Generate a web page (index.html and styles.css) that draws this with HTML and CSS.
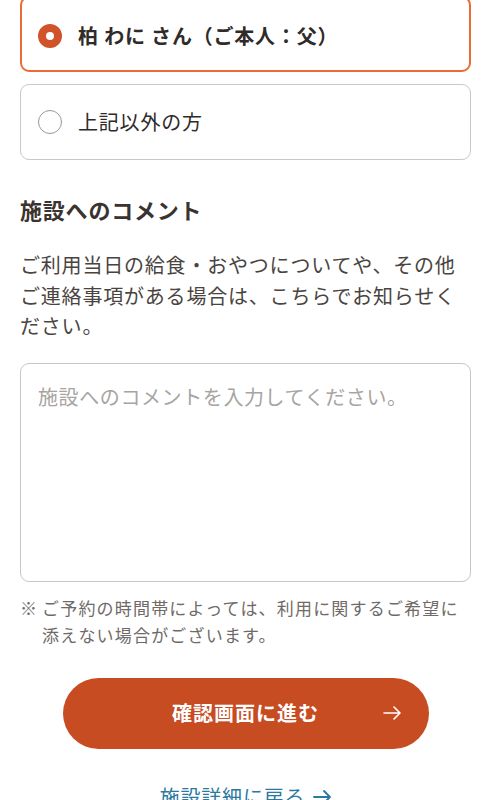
FILE: index.html
```html
<!DOCTYPE html>
<html lang="ja">
<head>
<meta charset="utf-8">
<title>施設へのコメント</title>
<link rel="stylesheet" href="styles.css">
</head>
<body>
<main class="page">
  <div class="options">
    <label class="option option--selected">
      <span class="radio radio--on"></span>
      <span class="option-label option-label--bold">柏 わに さん（ご本人：父）</span>
    </label>
    <label class="option">
      <span class="radio"></span>
      <span class="option-label">上記以外の方</span>
    </label>
  </div>

  <h2 class="section-title">施設へのコメント</h2>
  <p class="lead">ご利用当日の給食・おやつについてや、その他ご連絡事項がある場合は、こちらでお知らせください。</p>

  <textarea class="comment" placeholder="施設へのコメントを入力してください。"></textarea>

  <p class="note"><span class="note-mark">※</span><span class="note-text">ご予約の時間帯によっては、利用に関するご希望に添えない場合がございます。</span></p>

  <button class="primary-btn" type="button">
    <span class="btn-spacer"></span>
    <span class="btn-text">確認画面に進む</span>
    <svg class="btn-arrow" width="18" height="14" viewBox="0 0 18 14" fill="none" stroke="#fff" stroke-width="1.6" stroke-linecap="round" stroke-linejoin="round"><path d="M1 7H17M11 1L17 7L11 13"/></svg>
  </button>

  <a class="back-link" href="#">施設詳細に戻る<svg class="link-arrow" width="18" height="14" viewBox="0 0 18 14" fill="none" stroke="currentColor" stroke-width="1.8" stroke-linecap="round" stroke-linejoin="round"><path d="M1 7H17M11 1L17 7L11 13"/></svg></a>
</main>
</body>
</html>
```
FILE: styles.css
```css
html, body {
  margin: 0;
  padding: 0;
  background: #ffffff;
}

body {
  font-family: "Noto Sans CJK JP", "Noto Sans", sans-serif;
  color: #3a3431;
  letter-spacing: 0.05em;
}

.page {
  display: flex;
  flex-direction: column;
  padding: 0 21px 0 20px;
  margin-top: -4px;
}

.options {
  display: flex;
  flex-direction: column;
  gap: 12px;
}

.option {
  display: flex;
  align-items: center;
  gap: 16px;
  height: 76px;
  box-sizing: border-box;
  padding: 0 18px 0 17px;
  border: 1px solid #cbc8c5;
  border-radius: 9px;
  background: #fff;
}

.option--selected {
  border: 2px solid #ea6c35;
  padding-left: 16px;
  padding-top: 4px;
}

.radio {
  flex: 0 0 auto;
  width: 24px;
  height: 24px;
  box-sizing: border-box;
  border: 1.5px solid #9b9794;
  border-radius: 50%;
}

.radio--on {
  border: 8px solid #d0532a;
  background: #fff;
}

.option-label {
  font-size: 20px;
  line-height: 30px;
  color: #2f2b29;
}

.option-label--bold {
  font-weight: 700;
}

.section-title {
  margin: 33px 0 0;
  font-size: 22px;
  line-height: 33px;
  font-weight: 700;
  color: #3a3330;
}

.lead {
  margin: 24px 0 0;
  font-size: 20px;
  line-height: 30.5px;
  color: #4a4441;
}

.comment {
  display: block;
  margin: 21px 0 0;
  width: 100%;
  height: 219px;
  box-sizing: border-box;
  padding: 18px 16px 18px 17px;
  border: 1px solid #c9c6c3;
  border-radius: 9px;
  font-family: "Noto Sans CJK JP", "Noto Sans", sans-serif;
  font-size: 20px;
  line-height: 30px;
  letter-spacing: 0.03em;
  color: #333;
  resize: none;
  outline: none;
  background: #fff;
}

.comment::placeholder {
  color: #a8a4a1;
}

.note {
  display: flex;
  margin: 12px 0 0;
  font-size: 17px;
  line-height: 27px;
  letter-spacing: 0.07em;
  color: #6f6a67;
}

.note-mark {
  flex: 0 0 22px;
}

.note-text {
  flex: 1 1 auto;
}

.primary-btn {
  display: grid;
  grid-template-columns: 1fr auto 1fr;
  align-items: center;
  align-self: center;
  width: 366px;
  height: 71px;
  margin: 30px 0 0;
  padding: 0 28px 0 28px;
  border: none;
  border-radius: 36px;
  background: #c84c22;
  color: #fff;
  font-family: "Noto Sans CJK JP", "Noto Sans", sans-serif;
  font-size: 20px;
  font-weight: 700;
  letter-spacing: 0.05em;
}

.btn-text {
  line-height: 30px;
}

.btn-arrow {
  justify-self: end;
}

.back-link {
  display: flex;
  align-items: center;
  justify-content: center;
  gap: 8px;
  margin: 33px 0 0;
  font-size: 20px;
  line-height: 30px;
  color: #2b78a0;
  text-decoration: none;
}

.link-arrow {
  flex: 0 0 auto;
}
```
